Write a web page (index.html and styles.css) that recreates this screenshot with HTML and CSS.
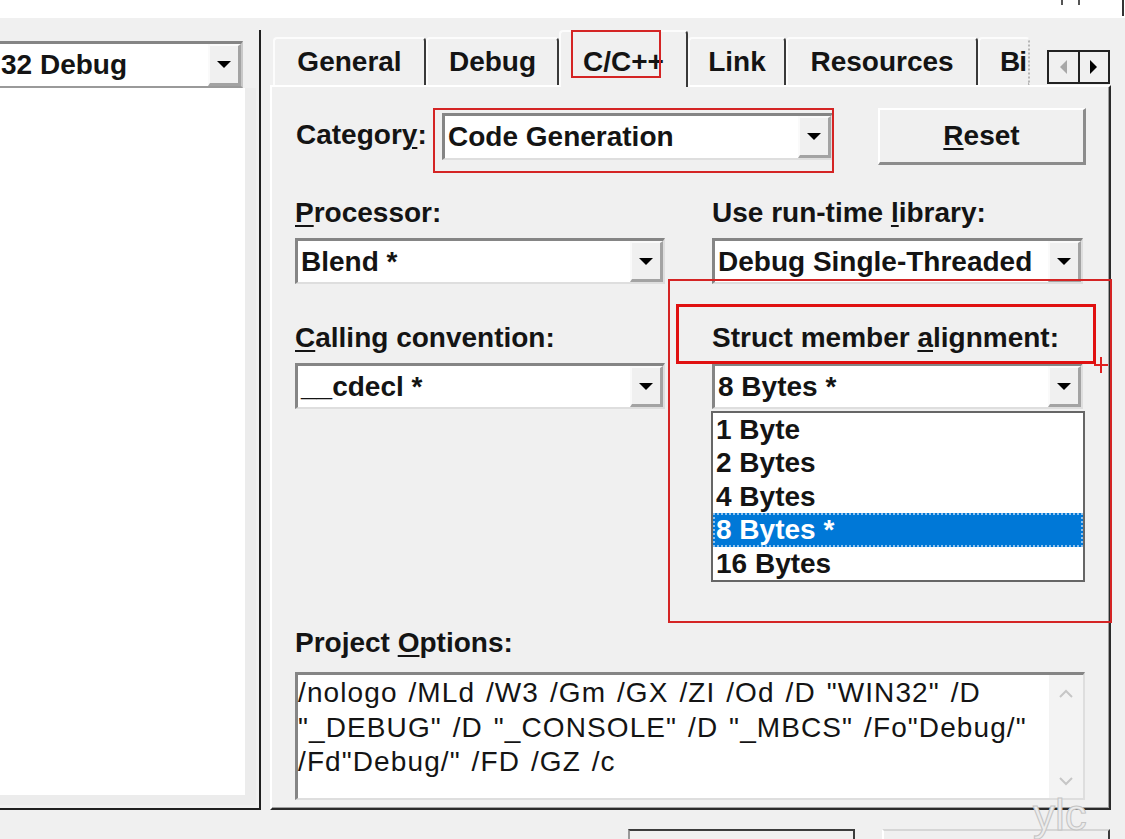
FILE: index.html
```html
<!DOCTYPE html>
<html>
<head>
<meta charset="utf-8">
<title>Project Settings</title>
<link rel="stylesheet" href="styles.css">
</head>
<body>
<div class="titlebar">
  <span class="tb-mark"></span><span class="tb-mark m2"></span><span class="tb-edge"></span>
</div>
<div class="main">
  <div class="left">
    <div class="combo cfg">
      <span class="ctext">32 Debug</span>
      <span class="cbtn"><i class="tri"></i></span>
    </div>
    <div class="tree"></div>
  </div>
  <div class="right">
    <div class="tabstrip">
      <div class="tabs">
        <div class="tab t-general">General</div>
        <div class="tab t-debug">Debug</div>
        <div class="tab sel t-cpp">C/C++</div>
        <div class="tab t-link">Link</div>
        <div class="tab t-res">Resources</div>
        <div class="tab t-bi"><span class="bi-text">Bi</span></div>
      </div>
      <div class="spin">
        <span class="sb sb-l"><i class="arr-l"></i></span>
        <span class="sb sb-r"><i class="arr-r"></i></span>
      </div>
    </div>
    <div class="page">
      <div class="row1">
        <div class="lbl cat">Categor<u>y</u>:</div>
        <div class="combo catcombo">
          <span class="ctext">Code Generation</span>
          <span class="cbtn"><i class="tri"></i></span>
        </div>
        <div class="btn reset"><u>R</u>eset</div>
      </div>
      <div class="grid">
        <div class="field">
          <div class="lbl"><u>P</u>rocessor:</div>
          <div class="combo"><span class="ctext">Blend *</span><span class="cbtn"><i class="tri"></i></span></div>
        </div>
        <div class="field">
          <div class="lbl">Use run-time <u>l</u>ibrary:</div>
          <div class="combo"><span class="ctext">Debug Single-Threaded</span><span class="cbtn"><i class="tri"></i></span></div>
        </div>
        <div class="field">
          <div class="lbl"><u>C</u>alling convention:</div>
          <div class="combo"><span class="ctext">__cdecl *</span><span class="cbtn"><i class="tri"></i></span></div>
        </div>
        <div class="field">
          <div class="lbl">Struct member <u>a</u>lignment:</div>
          <div class="combo"><span class="ctext">8 Bytes *</span><span class="cbtn"><i class="tri"></i></span></div>
          <ul class="droplist">
            <li>1 Byte</li>
            <li>2 Bytes</li>
            <li>4 Bytes</li>
            <li class="sel">8 Bytes *</li>
            <li>16 Bytes</li>
          </ul>
        </div>
      </div>
      <div class="lbl po">Project <u>O</u>ptions:</div>
      <div class="edit">
        <div class="etext">/nologo /MLd /W3 /Gm /GX /ZI /Od /D "WIN32" /D<br>"_DEBUG" /D "_CONSOLE" /D "_MBCS" /Fo"Debug/"<br>/Fd"Debug/" /FD /GZ /c</div>
        <div class="escroll">
          <svg width="16" height="10" viewBox="0 0 16 10"><polyline points="2,8 8,2 14,8" fill="none" stroke="#c6c6c6" stroke-width="2"/></svg>
          <svg width="16" height="10" viewBox="0 0 16 10"><polyline points="2,2 8,8 14,2" fill="none" stroke="#c6c6c6" stroke-width="2"/></svg>
        </div>
      </div>
    </div>
  </div>
</div>
<div class="footer">
  <div class="fbtn fbtn1"></div>
  <div class="fbtn fbtn2"></div>
</div>

<div class="anno a-tab"></div>
<div class="anno a-cat"></div>
<div class="anno a-big"></div>
<div class="anno a-struct"></div>
<svg class="cursor" width="20" height="20" viewBox="0 0 20 20"><path d="M10 2 V18 M3 10 H17" stroke="#e02020" stroke-width="2" fill="none"/></svg>
<div class="wm">ylc</div>
</body>
</html>
```
FILE: styles.css
```css
* { box-sizing: border-box; }
html, body { margin: 0; padding: 0; }
body {
  width: 1125px;
  height: 839px;
  overflow: hidden;
  position: relative;
  background: #f0f0f0;
  font-family: "Liberation Sans", Arial, sans-serif;
  font-size: 28px;
  font-weight: bold;
  color: #141414;
}
u { text-decoration-thickness: 2px; text-underline-offset: 3px; }

.titlebar {
  height: 18px;
  background: #fff;
  display: flex;
  align-items: flex-start;
  justify-content: flex-end;
}
.tb-mark { width: 2px; height: 5px; background: #555; margin-right: 15px; }
.tb-mark.m2 { margin-right: 42px; }
.tb-edge { width: 2px; height: 16px; background: #333; margin-right: 1px; }

.main { display: flex; margin-top: 12px; }

/* left panel */
.left {
  width: 261px;
  height: 780px;
  border-right: 2px solid #1f1f1f;
  border-bottom: 2px solid #1f1f1f;
  padding-top: 11px;
  display: flex;
  flex-direction: column;
}
.tree {
  width: 256px;
  height: 717px;
  background: #fff;
  border-right: 11px solid #ececec;
  border-bottom: 10px solid #ececec;
}

/* combo */
.combo {
  display: flex;
  background: #fff;
  border-top: 3px solid #858585;
  border-left: 3px solid #858585;
  border-right: 2px solid #dedede;
  border-bottom: 2px solid #dedede;
}
.combo.cfg {
  width: 243px;
  height: 47px;
  border-left: none;
  border-right: 2px solid #c8c8c8;
  border-bottom: 2px solid #9a9a9a;
}
.ctext {
  flex: 1;
  display: flex;
  align-items: center;
  padding-left: 3px;
  white-space: nowrap;
  overflow: hidden;
}
.cfg .ctext { padding-left: 1px; }
.cbtn {
  width: 33px;
  background: #f0f0f0;
  border-top: 2px solid #fafafa;
  border-left: 2px solid #fafafa;
  border-right: 3px solid #a3a3a3;
  border-bottom: 3px solid #a3a3a3;
  display: flex;
  align-items: center;
  justify-content: center;
}
.tri {
  width: 0;
  height: 0;
  border-left: 7px solid transparent;
  border-right: 7px solid transparent;
  border-top: 7px solid #000;
}

/* right panel */
.right { margin-left: 9px; width: 841px; }
.tabstrip { height: 55px; display: flex; align-items: flex-end; }
.tabs { display: flex; align-items: flex-end; padding-left: 3px; }
.tab {
  height: 48px;
  display: flex;
  align-items: center;
  justify-content: center;
  white-space: nowrap;
  background: #f0f0f0;
  border-left: 2px solid #fcfcfc;
  border-top: 2px solid #fcfcfc;
  border-right: 2px solid #3a3a3a;
  border-top-left-radius: 4px;
  border-top-right-radius: 4px;
}
.t-general { width: 153px; }
.t-debug { width: 133px; }
.t-cpp { width: 129px; }
.t-link { width: 98px; }
.t-res { width: 192px; }
.t-bi {
  width: 52px;
  justify-content: flex-start;
  padding-left: 20px;
  border-right: 2px dotted #b5b5b5;
}
.bi-text { letter-spacing: -1px; }
.tab.sel {
  height: 57px;
  margin-bottom: -2px;
  padding-top: 4px;
  position: relative;
  z-index: 2;
}
.spin {
  margin-left: 17px;
  margin-bottom: 1px;
  width: 63px;
  height: 34px;
  display: flex;
  border: 2px solid #222;
  background: #f0f0f0;
}
.sb { flex: 1; display: flex; align-items: center; justify-content: center; }
.sb-l { border-right: 2px solid #222; }
.arr-l {
  width: 0; height: 0;
  border-top: 7px solid transparent;
  border-bottom: 7px solid transparent;
  border-right: 7px solid #a8a8a8;
}
.arr-r {
  width: 0; height: 0;
  border-top: 7px solid transparent;
  border-bottom: 7px solid transparent;
  border-left: 7px solid #000;
}

.page {
  height: 725px;
  background: #f0f0f0;
  border-left: 2px solid #fff;
  border-top: 2px solid #fff;
  border-right: 2px solid #2a2a2a;
  border-bottom: 2px solid #2a2a2a;
  box-shadow: inset -1px -1px 0 #a0a0a0;
  padding: 21px 0 0 23px;
}
.lbl { line-height: 30px; white-space: nowrap; }
.row1 { display: flex; align-items: flex-start; height: 57px; }
.row1 .cat { width: 147px; margin-top: 12px; padding-left: 1px; }
.catcombo { width: 391px; height: 47px; margin-top: 5px; }
.btn {
  display: flex;
  align-items: center;
  justify-content: center;
  background: #f0f0f0;
  border-top: 2px solid #fff;
  border-left: 2px solid #fff;
  border-right: 3px solid #8c8c8c;
  border-bottom: 3px solid #8c8c8c;
}
.reset { margin-left: 45px; width: 208px; height: 57px; }

.grid {
  display: grid;
  grid-template-columns: 370px 371px;
  column-gap: 47px;
  row-gap: 39px;
  margin-top: 33px;
}
.field { position: relative; }
.field .combo { margin-top: 10px; height: 46px; }

.droplist {
  position: absolute;
  left: -1px;
  top: 88px;
  width: 374px;
  height: 171px;
  margin: 0;
  padding: 0;
  list-style: none;
  background: #fff;
  border: 2px solid #666;
  z-index: 3;
}
.droplist li { height: 33.4px; line-height: 33px; padding-left: 3px; white-space: nowrap; }
.droplist li.sel {
  background: #0078d7;
  color: #fff;
  outline: 2px dotted #8fc2ee;
  outline-offset: -2px;
}

.po { margin-top: 219px; }
.edit {
  margin-top: 14px;
  width: 790px;
  height: 128px;
  display: flex;
  background: #fff;
  border-top: 3px solid #858585;
  border-left: 3px solid #858585;
  border-right: 2px solid #dedede;
  border-bottom: 2px solid #dedede;
  font-weight: normal;
}
.etext {
  flex: 1;
  padding-top: 1px;
  line-height: 34.5px;
  letter-spacing: 1.1px;
  word-spacing: 2px;
  white-space: nowrap;
}
.escroll {
  width: 34px;
  flex: none;
  background: #f3f3f3;
  display: flex;
  flex-direction: column;
  justify-content: space-between;
  align-items: center;
  padding: 14px 0 12px;
}
.escroll svg { display: block; }

.footer { display: flex; padding-left: 628px; margin-top: 19px; }
.fbtn { height: 40px; background: #f0f0f0; }
.fbtn1 { width: 227px; border: 2px solid #3c3c3c; border-left-color: #9a9a9a; }
.fbtn2 {
  width: 228px;
  margin-left: 27px;
  border-top: 2px solid #d6d6d6;
  border-left: 2px solid #fff;
  border-right: 2px solid #3c3c3c;
}

/* annotations */
.anno { position: absolute; border: 2px solid #d42424; pointer-events: none; z-index: 5; }
.a-tab { left: 571px; top: 30px; width: 90px; height: 48px; }
.a-cat { left: 433px; top: 108px; width: 401px; height: 65px; }
.a-big { left: 668px; top: 279px; width: 444px; height: 344px; }
.a-struct { left: 676px; top: 304px; width: 420px; height: 60px; border-color: #e01010; border-width: 3px; }
.cursor { position: absolute; left: 1091px; top: 355px; z-index: 6; }
.wm {
  position: absolute;
  left: 1033px;
  top: 790px;
  font-size: 44px;
  font-weight: normal;
  color: #ececec;
  -webkit-text-stroke: 1px #c4c4c4;
  z-index: 6;
}
```
